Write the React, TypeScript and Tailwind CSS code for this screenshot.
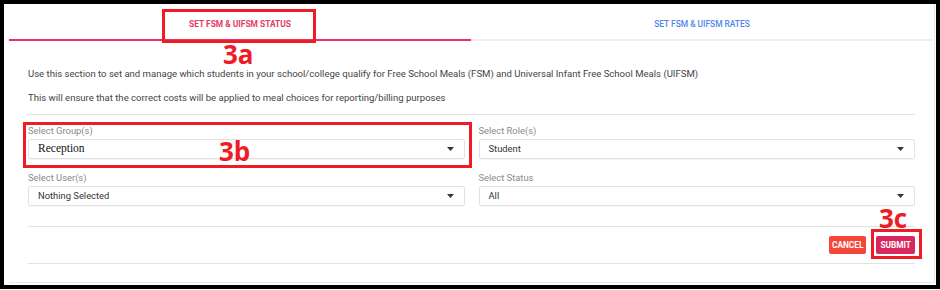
import React from "react";

const Caret = () => (
  <svg width="7" height="4" viewBox="0 0 7 4" className="shrink-0">
    <path d="M0 0 L7 0 L3.5 4 Z" fill="#333" />
  </svg>
);

function Select({ label, value, serif }: { label: string; value: string; serif?: boolean }) {
  return (
    <div className="flex flex-col">
      <div className="h-[14px] text-[9.4px] leading-[14px] text-[#8a8a8a] mb-[1px]">{label}</div>
      <div className="h-[20px] border border-[#e2e2e2] rounded-[2px] flex items-center justify-between pl-[9px] pr-[10px] shadow-[0_1px_1px_rgba(0,0,0,0.04)]">
        {serif ? (
          <span className="text-[11.5px] text-[#111]" style={{ fontFamily: '"Liberation Serif", "Times New Roman", serif' }}>
            {value}
          </span>
        ) : (
          <span className="text-[9.4px] text-[#333]">{value}</span>
        )}
        <Caret />
      </div>
    </div>
  );
}

export default function App() {
  return (
    <div
      className="relative w-[940px] h-[289px] border-4 border-black bg-white overflow-hidden"
      style={{ fontFamily: 'Roboto, "Liberation Sans", Arial, sans-serif' }}
    >
      <div className="ml-[5px] w-[926px] h-[279px] border-r border-b border-[#e6e6e6] flex flex-col">
        {/* Tabs */}
        <div className="flex">
          <div className="w-[462px] pt-[14px] pb-[9px] border-b-2 border-[#ec2f64] text-center text-[8.4px] leading-[12px] font-bold text-[#e33c68]">
            SET FSM &amp; UIFSM STATUS
          </div>
          <div className="w-[462px] pt-[14px] pb-[9px] border-b-2 border-[#eeeeee] text-center text-[8.4px] leading-[12px] font-medium text-[#4f86ec]">
            SET FSM &amp; UIFSM RATES
          </div>
        </div>
        {/* Body */}
        <div className="px-[19px] flex flex-col">
          <p className="mt-[25px] text-[9.55px] leading-[16px] text-[#444]">
            Use this section to set and manage which students in your school/college qualify for Free School Meals (FSM) and Universal Infant Free School Meals (UIFSM)
          </p>
          <p className="mt-[8px] text-[9.55px] leading-[16px] text-[#444]">
            This will ensure that the correct costs will be applied to meal choices for reporting/billing purposes
          </p>
          <div className="mt-[8px] h-px bg-[#e3e3e3]" />
          <div className="mt-[9px] grid grid-cols-2 gap-x-[14px] gap-y-[12px]">
            <Select label="Select Group(s)" value="Reception" serif />
            <Select label="Select Role(s)" value="Student" />
            <Select label="Select User(s)" value="Nothing Selected" />
            <Select label="Select Status" value="All" />
          </div>
          <div className="mt-[20px] h-px bg-[#e3e3e3]" />
          <div className="mt-[9px] flex justify-end gap-[10px]">
            <button className="h-[18px] px-[3px] rounded-[2px] bg-[#f4473a] text-white text-[8.3px] font-bold leading-[18px]">
              CANCEL
            </button>
            <button className="h-[18px] px-[4px] rounded-[2px] bg-[#d8275f] text-white text-[8.3px] font-bold leading-[18px]">
              SUBMIT
            </button>
          </div>
          <div className="mt-[9px] h-px bg-[#e3e3e3]" />
        </div>
      </div>

      {/* Annotations */}
      <div className="absolute left-[158px] top-[5px] w-[154px] h-[34px] border-[3px] border-[#ee1c25]" />
      <div
        className="absolute left-[219px] top-[42px] text-[26px] font-bold text-[#ee1c25] leading-[16px]"
        style={{ fontFamily: '"Open Sans", sans-serif' }}
      >
        3a
      </div>
      <div className="absolute left-[19px] top-[118px] w-[449px] h-[46px] border-[3px] border-[#ee1c25]" />
      <div
        className="absolute left-[215px] top-[135px] text-[26px] font-bold text-[#ee1c25] leading-[24px]"
        style={{ fontFamily: '"Open Sans", sans-serif' }}
      >
        3b
      </div>
      <div className="absolute left-[867px] top-[225px] w-[51px] h-[30px] border-[3px] border-[#ee1c25]" />
      <div
        className="absolute left-[875px] top-[202px] text-[26px] font-bold text-[#ee1c25] leading-[24px]"
        style={{ fontFamily: '"Open Sans", sans-serif' }}
      >
        3c
      </div>
    </div>
  );
}
